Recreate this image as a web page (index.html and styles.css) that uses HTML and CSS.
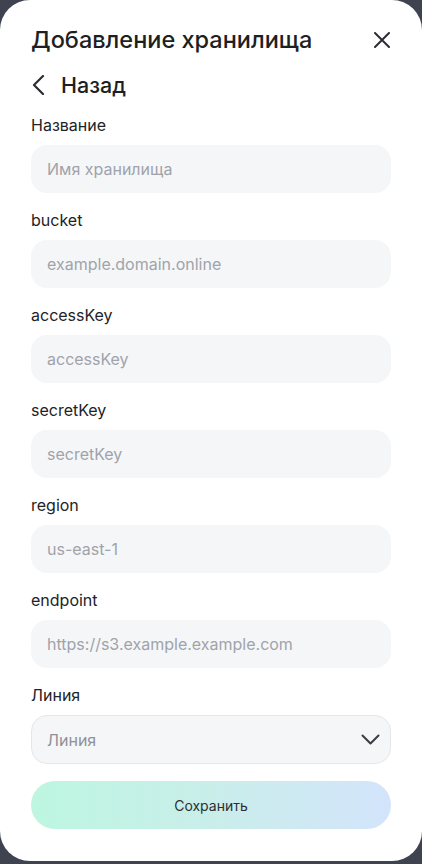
FILE: index.html
```html
<!DOCTYPE html>
<html lang="ru">
<head>
<meta charset="utf-8">
<title>Добавление хранилища</title>
<link rel="stylesheet" href="styles.css">
</head>
<body>
<div class="card">
  <div class="header">
    <h1 class="title">Добавление хранилища</h1>
    <button class="close" aria-label="Закрыть">
      <svg width="16" height="16" viewBox="0 0 16 16"><path d="M1 1L15 15M15 1L1 15" stroke="#2b2d33" stroke-width="2" stroke-linecap="round" fill="none"/></svg>
    </button>
  </div>
  <div class="back">
    <svg class="back-icon" width="14" height="20" viewBox="0 0 14 20"><path d="M12 1L3 10L12 19" stroke="#2b2d33" stroke-width="2.2" stroke-linecap="round" stroke-linejoin="round" fill="none"/></svg>
    <span>Назад</span>
  </div>
  <form class="form">
    <div class="field">
      <label class="label">Название</label>
      <div class="input">Имя хранилища</div>
    </div>
    <div class="field">
      <label class="label">bucket</label>
      <div class="input">example.domain.online</div>
    </div>
    <div class="field">
      <label class="label">accessKey</label>
      <div class="input">accessKey</div>
    </div>
    <div class="field">
      <label class="label">secretKey</label>
      <div class="input">secretKey</div>
    </div>
    <div class="field">
      <label class="label">region</label>
      <div class="input">us-east-1</div>
    </div>
    <div class="field">
      <label class="label">endpoint</label>
      <div class="input">https://s3.example.example.com</div>
    </div>
    <div class="field">
      <label class="label">Линия</label>
      <div class="input select">
        <span>Линия</span>
        <svg width="19" height="12" viewBox="0 0 19 12"><path d="M1.5 1.5L9.5 9.5L17.5 1.5" stroke="#3a3d44" stroke-width="2" stroke-linecap="round" stroke-linejoin="round" fill="none"/></svg>
      </div>
    </div>
    <div class="save">Сохранить</div>
  </form>
</div>
</body>
</html>
```
FILE: styles.css
```css
html, body {
  margin: 0;
  padding: 0;
  background: #3f4350;
}
body {
  font-family: Inter, "Noto Sans", sans-serif;
  color: #222327;
}
.card {
  width: 422px;
  height: 861px;
  box-sizing: border-box;
  background: #ffffff;
  border-radius: 30px;
  padding: 27px 31px 0 31px;
}
.header {
  display: flex;
  justify-content: space-between;
  align-items: center;
  height: 26px;
}
.title {
  margin: 0;
  font-size: 23.5px;
  font-weight: 500;
  line-height: 26px;
  color: #1e1f23;
}
.close {
  border: none;
  background: none;
  padding: 0;
  margin-right: 1px;
  width: 16px;
  height: 16px;
  display: flex;
}
.back {
  display: flex;
  align-items: center;
  gap: 16px;
  margin-top: 18px;
  height: 28px;
  font-size: 21.5px;
  font-weight: 500;
  color: #1e1f23;
}
.back-icon {
  display: block;
}
.form {
  margin-top: 16px;
  display: flex;
  flex-direction: column;
}
.field {
  display: flex;
  flex-direction: column;
  gap: 10px;
  margin-bottom: 17px;
}
.label {
  font-size: 16px;
  line-height: 20px;
  height: 20px;
  color: #222327;
}
.input {
  height: 48px;
  box-sizing: border-box;
  border-radius: 16px;
  background: #f5f6f8;
  padding: 0 16px;
  display: flex;
  align-items: center;
  font-size: 16px;
  color: #a0a3aa;
}
.select {
  height: 49px;
  border: 1px solid #e4e6eb;
  padding: 0 10px 0 15px;
  justify-content: space-between;
  color: #8e9198;
}
.field:last-of-type {
  margin-bottom: 19px;
}
.save {
  height: 48px;
  border-radius: 24px;
  background: linear-gradient(90deg, #bdf6e1 0%, #c9eeea 50%, #d3e4fb 100%);
  display: flex;
  align-items: center;
  justify-content: center;
  font-size: 14px;
  color: #2c2e33;
}
```
